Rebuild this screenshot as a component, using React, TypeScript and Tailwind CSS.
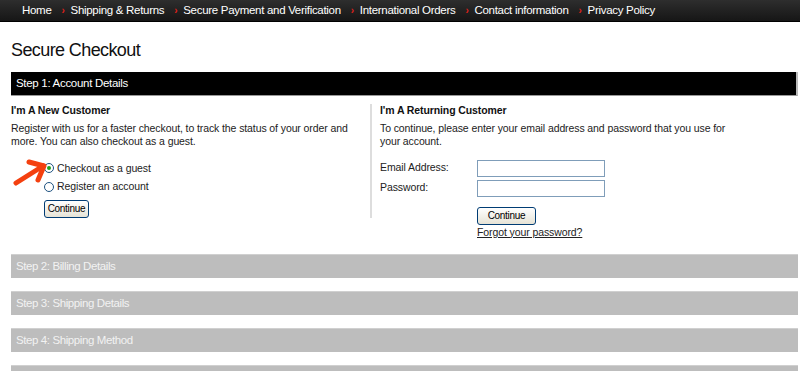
import React from 'react';

const navItems = ['Home', 'Shipping & Returns', 'Secure Payment and Verification', 'International Orders', 'Contact information', 'Privacy Policy'];

const Radio: React.FC<{ checked?: boolean }> = ({ checked }) => (
  <span className="w-[10px] h-[10px] rounded-full border border-[#1c5180] bg-white flex items-center justify-center shrink-0">
    {checked && <span className="w-[4px] h-[4px] rounded-full bg-[#21a121]"></span>}
  </span>
);

const XpButton: React.FC<{ className?: string }> = ({ className }) => (
  <button className={`h-[18px] rounded-[3px] border border-[#003c74] bg-gradient-to-b from-white to-[#e6e3d6] text-[10px] text-black tracking-[-0.3px] leading-none ${className ?? ''}`}>
    Continue
  </button>
);

const App: React.FC = () => {
  return (
    <div className="w-[800px] h-[371px] overflow-hidden bg-white relative font-['Liberation_Sans',sans-serif] text-[#222]">
      {/* top nav */}
      <div className="h-[22px] bg-gradient-to-b from-[#2e2e2e] to-[#161616] border-b border-black flex items-center pl-[22px] text-white text-[11.5px] tracking-[-0.3px]">
        {navItems.map((item, i) => (
          <React.Fragment key={item}>
            {i > 0 && <span className="text-[#e0201a] text-[10px] font-bold ml-[10px] mr-[6px]">›</span>}
            <span>{item}</span>
          </React.Fragment>
        ))}
      </div>

      <div className="pl-[11px] pr-[2px]">
        <h1 className="text-[18px] leading-[22px] mt-[17px] mb-[11px] text-[#111] tracking-[-0.6px]">Secure Checkout</h1>

        <div className="h-[24px] bg-black border-b border-[#999] border-r-2 border-r-[#bbb] flex items-center pl-[5px] text-white text-[11.5px] tracking-[-0.3px]">
          Step 1: Account Details
        </div>

        <div className="flex items-start pt-[8px] text-[10.5px] tracking-[-0.1px] leading-[13.5px]">
          {/* new customer */}
          <div className="w-[361px] border-r-2 border-[#ddd] pr-[10px]">
            <h3 className="font-bold text-[10.5px] tracking-[-0.1px] text-[#111] mb-[4px]">I'm A New Customer</h3>
            <p className="w-[345px]">Register with us for a faster checkout, to track the status of your order and more. You can also checkout as a guest.</p>
            <div className="pl-[33px] mt-[13px] flex flex-col gap-[5px]">
              <label className="flex items-center gap-[3px]"><Radio checked /> Checkout as a guest</label>
              <label className="flex items-center gap-[3px]"><Radio /> Register an account</label>
              <XpButton className="w-[45px] mt-[1px]" />
            </div>
          </div>

          {/* returning customer */}
          <div className="pl-[8px] w-[390px]">
            <h3 className="font-bold text-[10.5px] tracking-[-0.1px] text-[#111] mb-[4px]">I'm A Returning Customer</h3>
            <p className="w-[360px]">To continue, please enter your email address and password that you use for your account.</p>
            <div className="mt-[11px] grid grid-cols-[97px_128px] gap-y-[3px] items-start">
              <span className="pt-[1px]">Email Address:</span>
              <input className="h-[17px] border border-[#7f9db9] bg-white" />
              <span className="pt-[1px]">Password:</span>
              <input type="password" className="h-[17px] border border-[#7f9db9] bg-white" />
              <span></span>
              <div className="pt-[7px] flex flex-col items-start">
                <XpButton className="w-[59px]" />
                <a href="#" className="underline mt-[1px] text-[#222]">Forgot your password?</a>
              </div>
            </div>
          </div>
        </div>

        <div className="mt-[15px] flex flex-col gap-[13px]">
          {['Step 2: Billing Details', 'Step 3: Shipping Details', 'Step 4: Shipping Method', 'Step 5: Confirm Order'].map((s) => (
            <div key={s} className="h-[24px] shrink-0 bg-[#bdbdbd] border-t border-[#d0d0d0] flex items-center pl-[5px] text-[#f2f2f2] text-[11.5px] tracking-[-0.4px]">
              {s}
            </div>
          ))}
        </div>
      </div>

      {/* red arrow pointing at the guest option */}
      <svg className="absolute left-[10px] top-[155px]" width="40" height="35" viewBox="0 0 40 35">
        <g stroke="#f4400f" strokeWidth="5" strokeLinecap="round" strokeLinejoin="round" fill="none">
          <path d="M6 28 L33 11" />
          <path d="M19 7 L34 11 L28 25" />
        </g>
      </svg>
    </div>
  );
};

export default App;
